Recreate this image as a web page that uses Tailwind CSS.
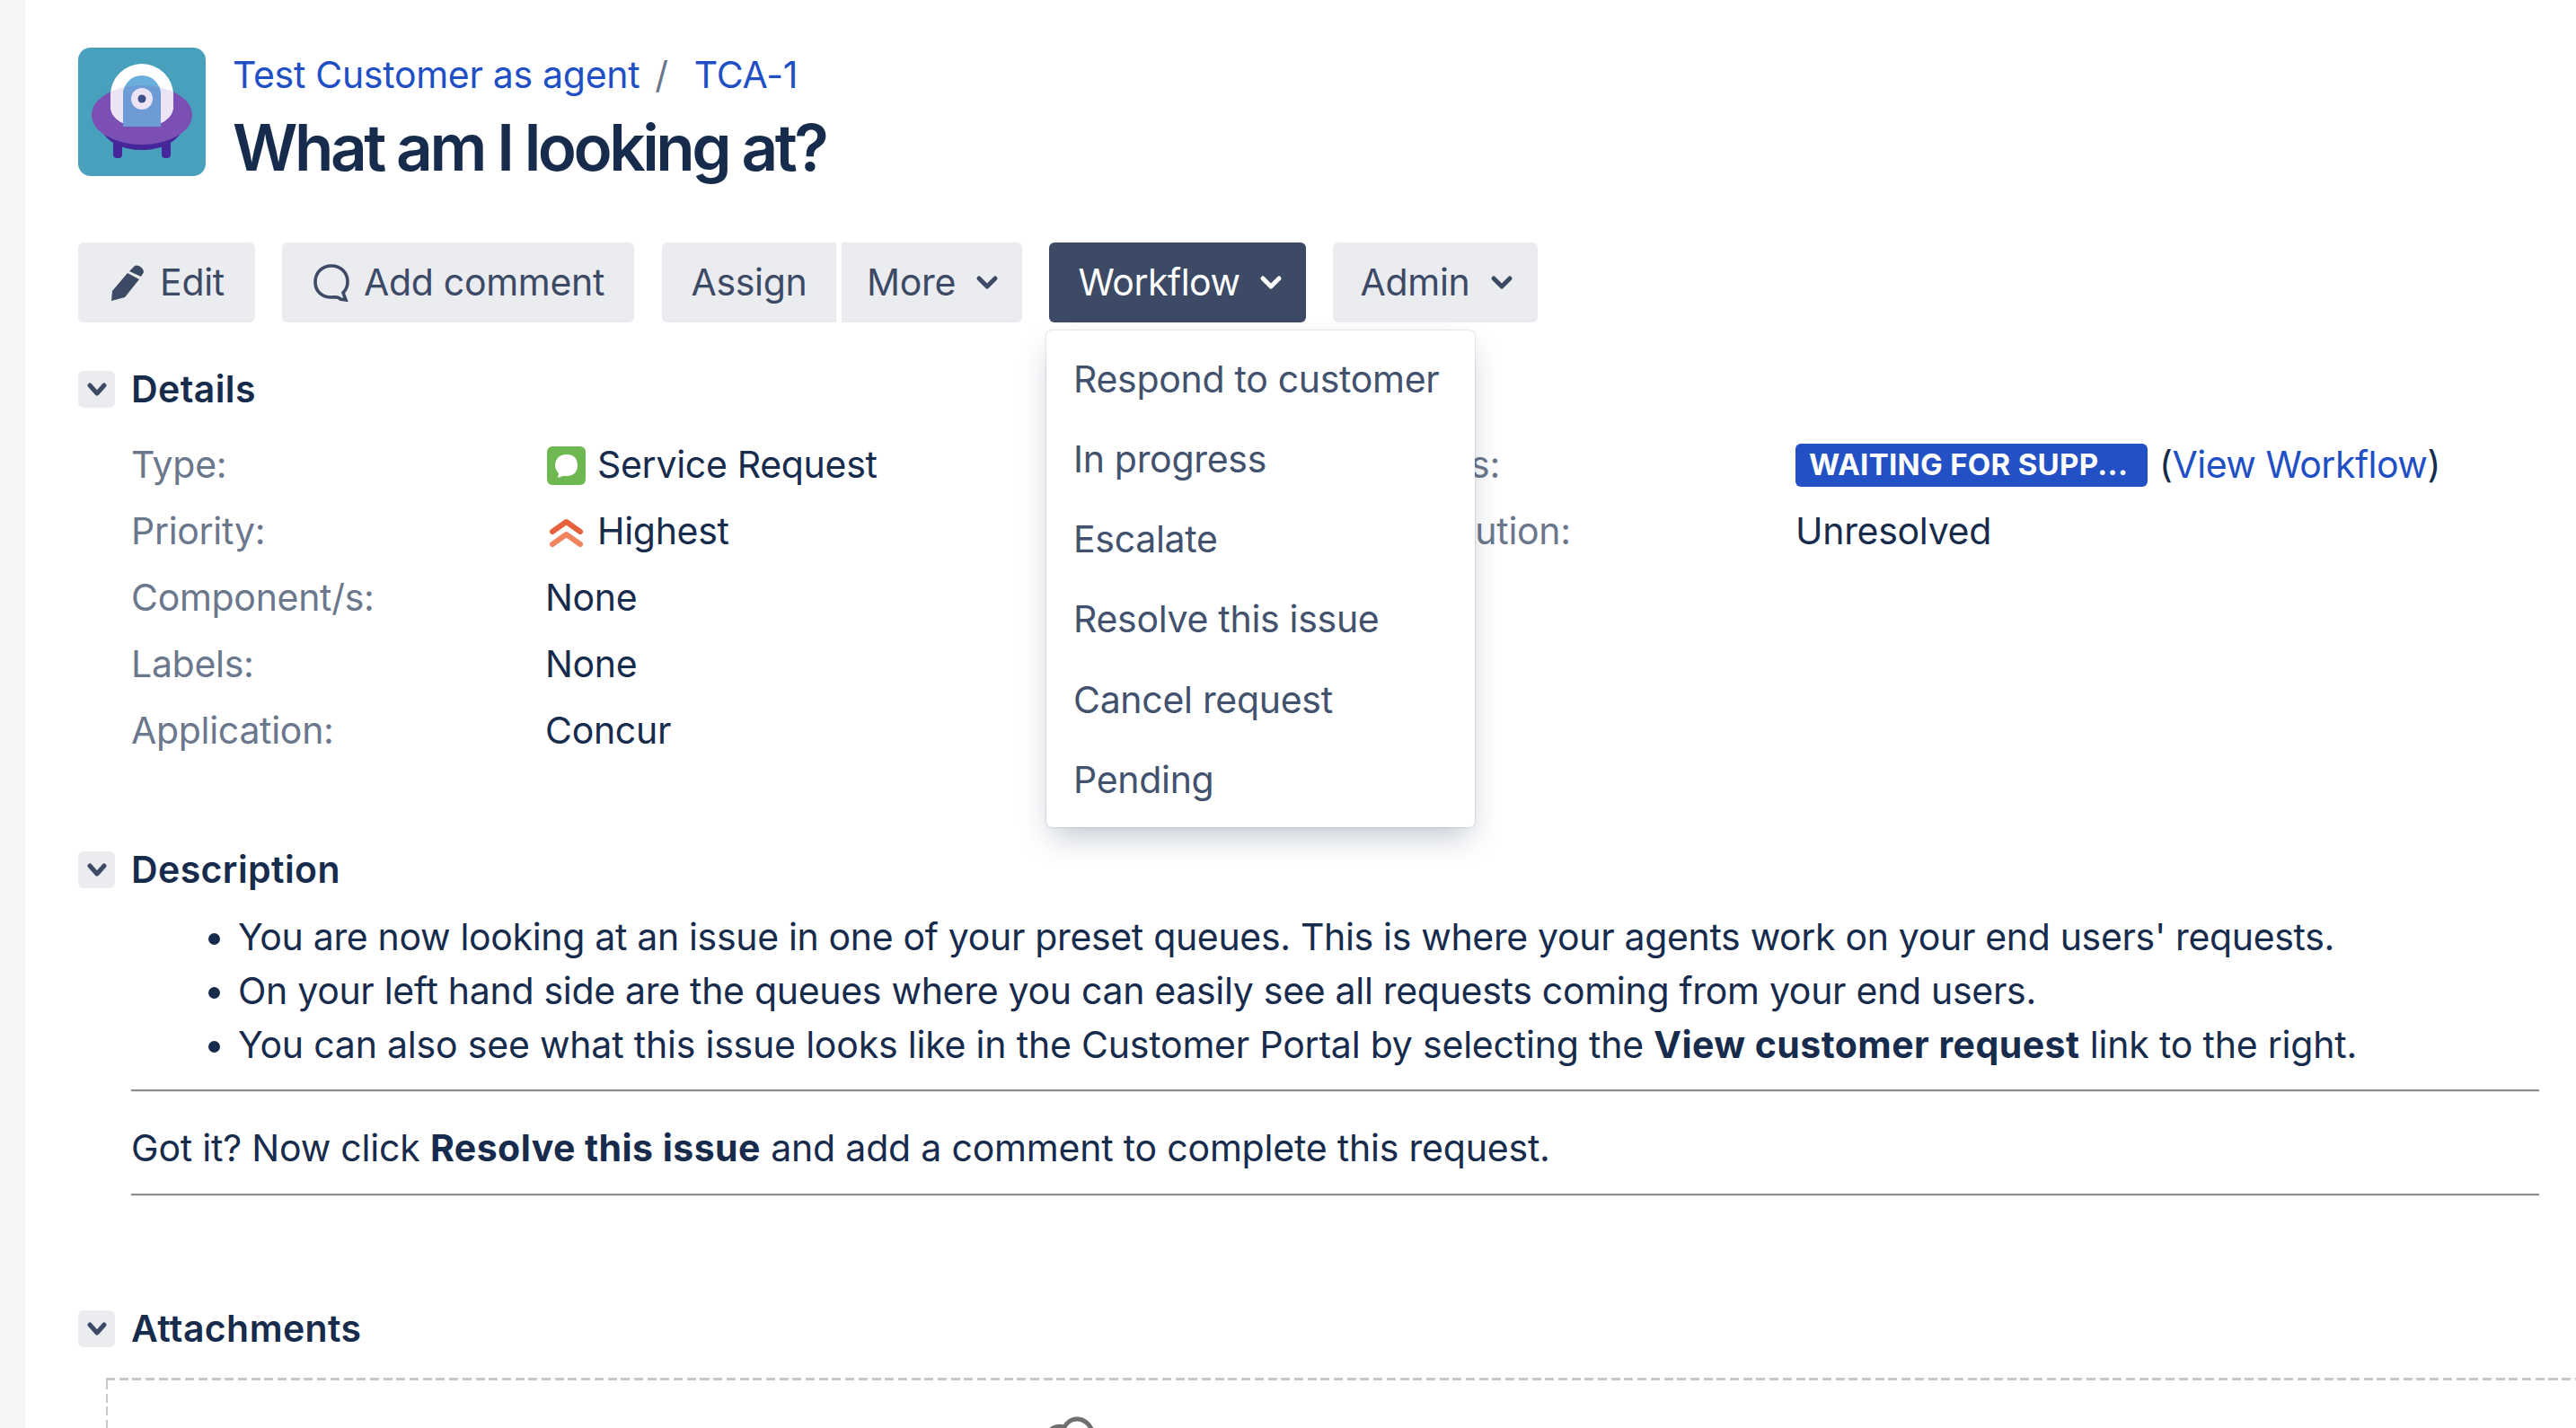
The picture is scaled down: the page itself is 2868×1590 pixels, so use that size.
<!DOCTYPE html>
<html><head><meta charset="utf-8"><script src="https://cdn.jsdelivr.net/npm/@tailwindcss/browser@4"></script></head>
<body class="bg-white">
<div class="flex w-[2868px] h-[1590px] overflow-hidden font-['Inter',sans-serif] text-[41px] tracking-[-0.3px] text-[#172b4d]">
  <div class="w-[28px] shrink-0 bg-[#f4f5f7]"></div>
  <main class="relative flex-1 min-w-0 pl-[59px] pt-[53px]">
    <header class="flex gap-[30px] h-[143px]">
      <svg class="w-[142px] h-[143px] shrink-0" viewBox="0 0 142 143">
        <defs><clipPath id="saucer"><ellipse cx="71" cy="75" rx="56" ry="33"/></clipPath></defs>
        <rect width="142" height="143" rx="14" fill="#48a0bd"/>
        <rect x="39" y="100" width="10" height="23" rx="4" fill="#45269b"/>
        <rect x="93" y="100" width="10" height="23" rx="4" fill="#45269b"/>
        <path d="M25 90 C38 122 104 122 117 90 Z" fill="#45269b"/>
        <ellipse cx="71" cy="75" rx="56" ry="33" fill="#7c4fb5"/>
        <path d="M36 53 a35 35 0 0 1 70 0 V65 C106 80 90 88 71 88 C52 88 36 80 36 65Z" fill="#fff"/>
        <path d="M36 53 a35 35 0 0 1 70 0 V65 C106 80 90 88 71 88 C52 88 36 80 36 65Z" fill="#ebe4f4" clip-path="url(#saucer)"/>
        <path d="M50 88 V52 a21 21 0 0 1 42 0 V88 Z" fill="#6aaedc"/>
        <path d="M50 88 V52 a21 21 0 0 1 42 0 V88 Z" fill="#6d9bd6" clip-path="url(#saucer)"/>
        <circle cx="71" cy="57" r="12" fill="#ebe4f4"/>
        <circle cx="71" cy="57" r="4.500" fill="#3f4f8c"/>
      </svg>
      <div class="flex flex-col">
        <div class="flex items-center h-[62px] text-[#1f4fc4]">
          <span>Test Customer as agent</span><span class="text-[#6b778c] ml-[17px] mr-[29px]">/</span><span>TCA-1</span>
        </div>
        <h1 class="text-[71px] font-semibold leading-[88px] mt-[5px] tracking-[-3.5px]">What am I looking at?</h1>
      </div>
    </header>
    <div class="flex mt-[74px] h-[89px] text-[#3c4a66]">
      <button class="w-[197px] h-full rounded-[6px] bg-[#ebecf0] flex items-center justify-center gap-[16px] pl-[1px]">
        <svg class="w-[40px] h-[42px]" viewBox="0 0 40 42"><path d="M28 2 C31 0 38 4 38 9 L35 14 L22 8 Z M20 10 L33 17 L17 37 L2 41 L3 30 Z" fill="#3c4a66"/></svg>
        <span>Edit</span>
      </button>
      <button class="ml-[30px] w-[392px] h-full rounded-[6px] bg-[#ebecf0] flex items-center justify-center gap-[15px] pl-[1px]">
        <svg class="w-[42px] h-[44px]" viewBox="0 0 42 44"><path d="M21 3 C10 3 3 11 3 21 C3 31 10 38 21 38 C25 38 29 37 31 40 L37 41 L34 33 C37 30 39 26 39 21 C39 11 32 3 21 3 Z" fill="none" stroke="#3c4a66" stroke-width="3.6"/></svg>
        <span>Add comment</span>
      </button>
      <button class="ml-[31px] w-[194px] h-full rounded-l-[6px] bg-[#ebecf0]">Assign</button>
      <button class="ml-[6px] w-[201px] h-full rounded-r-[6px] bg-[#ebecf0] flex items-center justify-center gap-[22px] pl-[2px]">
        <span>More</span>
        <svg class="w-[26px] h-[18px]" viewBox="0 0 26 18"><path d="M4 4 L13 13 L22 4" fill="none" stroke="#3c4a66" stroke-width="5" stroke-linecap="round" stroke-linejoin="round"/></svg>
      </button>
      <button class="ml-[30px] w-[286px] h-full rounded-[6px] bg-[#3c4a66] text-white flex items-center justify-center gap-[22px] pl-[7px]">
        <span class="tracking-[-0.5px]">Workflow</span>
        <svg class="w-[26px] h-[18px]" viewBox="0 0 26 18"><path d="M4 4 L13 13 L22 4" fill="none" stroke="#fff" stroke-width="5" stroke-linecap="round" stroke-linejoin="round"/></svg>
      </button>
      <button class="ml-[30px] w-[228px] h-full rounded-[6px] bg-[#ebecf0] flex items-center justify-center gap-[23px] pl-[4px]">
        <span>Admin</span>
        <svg class="w-[26px] h-[18px]" viewBox="0 0 26 18"><path d="M4 4 L13 13 L22 4" fill="none" stroke="#3c4a66" stroke-width="5" stroke-linecap="round" stroke-linejoin="round"/></svg>
      </button>
    </div>

    <section class="mt-[54px]">
      <div class="flex items-center gap-[18px] h-[41px]">
        <span class="w-[41px] h-[41px] rounded-[6px] bg-[#ebecf0] flex items-center justify-center"><svg class="w-[24px] h-[16px]" viewBox="0 0 24 16"><path d="M4 3 L12 12 L20 3" fill="none" stroke="#3c4a66" stroke-width="5" stroke-linecap="round" stroke-linejoin="round"/></svg></span>
        <h2 class="font-semibold tracking-[0.4px]">Details</h2>
      </div>
      <div class="flex pl-[59px] mt-[27px]">
        <dl class="w-[1392px] grid grid-cols-[461px_1fr] auto-rows-[74px] items-center">
          <dt class="text-[#6b778c]">Type:</dt>
          <dd class="flex items-center gap-[13px] pl-[2px]">
            <svg class="w-[43px] h-[43px]" viewBox="0 0 43 43"><rect width="43" height="43" rx="6" fill="#6fb851"/><path d="M22 9 C14 9 9 14 9 21 C9 25 11 28 13 30 L12 35 L18 33 C19 33 21 33 22 33 C30 33 34 28 34 21 C34 14 30 9 22 9 Z" fill="#fff"/></svg>
            <span>Service Request</span>
          </dd>
          <dt class="text-[#6b778c]">Priority:</dt>
          <dd class="flex items-center gap-[13px] pl-[2px]">
            <svg class="w-[43px] h-[43px]" viewBox="0 0 43 43"><path d="M6 21 L21.500 10 L37 21" fill="none" stroke="#e9603c" stroke-width="6" stroke-linecap="round" stroke-linejoin="round"/><path d="M6 35 L21.500 24 L37 35" fill="none" stroke="#f2835f" stroke-width="6" stroke-linecap="round" stroke-linejoin="round"/></svg>
            <span>Highest</span>
          </dd>
          <dt class="text-[#6b778c]">Component/s:</dt><dd>None</dd>
          <dt class="text-[#6b778c]">Labels:</dt><dd>None</dd>
          <dt class="text-[#6b778c]">Application:</dt><dd>Concur</dd>
        </dl>
        <dl class="flex-1 grid grid-cols-[461px_1fr] auto-rows-[74px] items-center">
          <dt class="text-[#6b778c]">Status:</dt>
          <dd class="flex items-center whitespace-nowrap">
            <span class="w-[392px] h-[48px] rounded-[6px] bg-[#2350c4] text-white text-[33px] font-bold tracking-[0.3px] flex items-center pl-[15px] whitespace-nowrap">WAITING FOR SUPP...</span>
            <span class="ml-[13px] tracking-[-0.5px]">(<span class="text-[#1f4fc4]">View Workflow</span>)</span>
          </dd>
          <dt class="text-[#6b778c]">Resolution:</dt><dd>Unresolved</dd>
        </dl>
      </div>
    </section>

    <section class="mt-[97px]">
      <div class="flex items-center gap-[18px] h-[41px]">
        <span class="w-[41px] h-[41px] rounded-[6px] bg-[#ebecf0] flex items-center justify-center"><svg class="w-[24px] h-[16px]" viewBox="0 0 24 16"><path d="M4 3 L12 12 L20 3" fill="none" stroke="#3c4a66" stroke-width="5" stroke-linecap="round" stroke-linejoin="round"/></svg></span>
        <h2 class="font-semibold tracking-[0.4px]">Description</h2>
      </div>
      <div class="pl-[59px] mr-[41px]">
        <ul class="list-disc pl-[119px] mt-[24px] leading-[60px]">
          <li class="tracking-[-0.33px]">You are now looking at an issue in one of your preset queues. This is where your agents work on your end users' requests.</li>
          <li>On your left hand side are the queues where you can easily see all requests coming from your end users.</li>
          <li class="tracking-[-0.2px]">You can also see what this issue looks like in the Customer Portal by selecting the <b class="font-bold tracking-[0.45px]">View customer request</b> link to the right.</li>
        </ul>
        <hr class="mt-[20px] border-0 border-t-2 border-[#8c8c8c] h-[3px] bg-[#e6e6e6]">
        <p class="leading-[60px] mt-[32px] tracking-[-0.2px]">Got it? Now click <b class="font-bold tracking-[0.45px]">Resolve this issue</b> and add a comment to complete this request.</p>
        <hr class="mt-[21px] border-0 border-t-2 border-[#8c8c8c] h-[3px] bg-[#e6e6e6]">
      </div>
    </section>

    <section class="mt-[127px]">
      <div class="flex items-center gap-[18px] h-[41px]">
        <span class="w-[41px] h-[41px] rounded-[6px] bg-[#ebecf0] flex items-center justify-center"><svg class="w-[24px] h-[16px]" viewBox="0 0 24 16"><path d="M4 3 L12 12 L20 3" fill="none" stroke="#3c4a66" stroke-width="5" stroke-linecap="round" stroke-linejoin="round"/></svg></span>
        <h2 class="font-semibold tracking-[0.4px]">Attachments</h2>
      </div>
      <div class="ml-[31px] mt-[34px] h-[200px] flex flex-col">
        <div class="h-[3px] shrink-0 bg-[repeating-linear-gradient(90deg,#c8c8c8_0_10px,transparent_10px_14.7px)]"></div>
        <div class="flex-1 flex">
          <div class="w-[2px] bg-[repeating-linear-gradient(180deg,#c8c8c8_0_10px,transparent_10px_14.7px)]"></div>
          <svg class="ml-[1039px] mt-[38px] w-[80px] h-[40px] shrink-0" viewBox="0 0 80 40"><path d="M8 20 C12 14 20 12 26 14 C32 2 50 0 58 20" fill="none" stroke="#707070" stroke-width="5"/></svg>
        </div>
      </div>
    </section>

    <div class="absolute left-[1137px] top-[368px] w-[477px] h-[553px] bg-white rounded-[6px] shadow-[0_16px_32px_-6px_rgba(9,30,66,0.25),0_0_2px_rgba(9,30,66,0.3)] pt-[10px] text-[#42526e]">
      <div class="h-[89.200px] pl-[30px] flex items-center">Respond to customer</div>
      <div class="h-[89.200px] pl-[30px] flex items-center">In progress</div>
      <div class="h-[89.200px] pl-[30px] flex items-center">Escalate</div>
      <div class="h-[89.200px] pl-[30px] flex items-center">Resolve this issue</div>
      <div class="h-[89.200px] pl-[30px] flex items-center">Cancel request</div>
      <div class="h-[89.200px] pl-[30px] flex items-center">Pending</div>
    </div>
  </main>
</div>
</body></html>
